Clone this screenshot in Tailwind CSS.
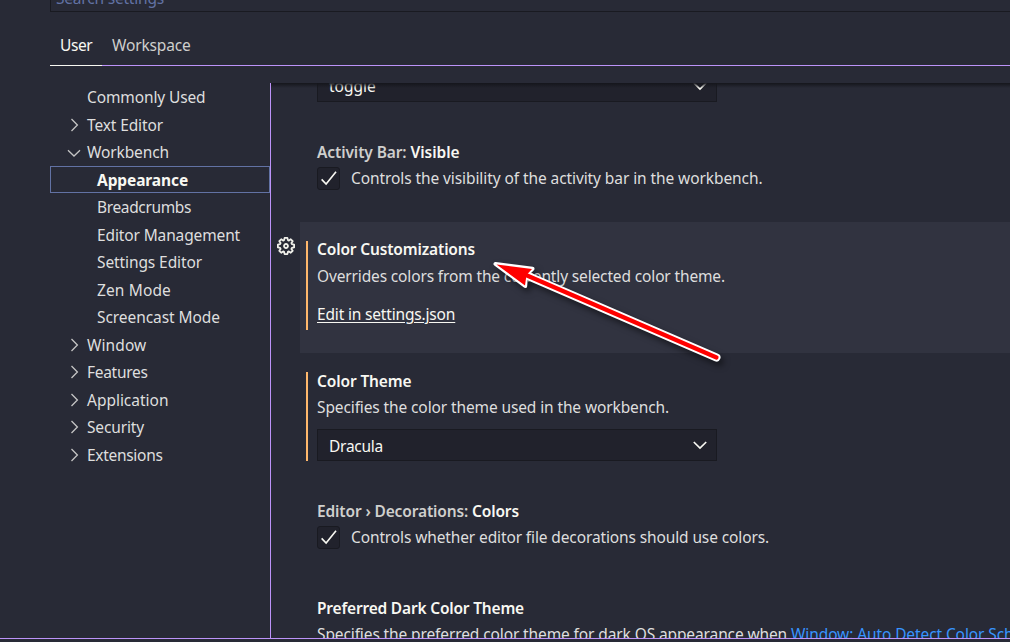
<!DOCTYPE html>
<html lang="en">
<head>
<meta charset="utf-8">
<title>Settings</title>
<script src="https://cdn.jsdelivr.net/npm/@tailwindcss/browser@4"></script>
</head>
<body class="bg-[#282a36]">
<svg class="hidden">
  <symbol id="right" viewBox="0 0 16 16"><path d="M5.5 2 L11.4 8 L5.5 14" fill="none" stroke="#c5c5c5" stroke-width="1.3"/></symbol>
  <symbol id="down" viewBox="0 0 16 16"><path d="M2 5.3 L8 11 L14 5.3" fill="none" stroke="#c5c5c5" stroke-width="1.3"/></symbol>
  <symbol id="drop" viewBox="0 0 16 16"><path d="M1.8 5 L8 11 L14.2 5" fill="none" stroke="#f8f8f2" stroke-width="1.7"/></symbol>
  <symbol id="check" viewBox="0 0 20 20"><path d="M1.8 10.4 L6.8 15.6 L17.8 2" fill="none" stroke="#f8f8f2" stroke-width="1.8"/></symbol>
</svg>
<div class="relative flex h-[642px] w-[1010px] flex-col overflow-hidden bg-[#282a36] font-['Noto_Sans','Open_Sans',sans-serif] text-[15.5px] leading-[18px] tracking-[-0.12px] whitespace-nowrap text-[#dedede]">
  <div class="ml-[50px] flex h-[12px] shrink-0 items-end overflow-hidden border-b border-l border-[#191a21] pl-[5px] text-[#6272a4]">
    <span class="pb-[3px] leading-[20px] tracking-[-0.2px]">Search settings</span>
  </div>
  <nav class="ml-[50px] flex h-[54px] shrink-0 border-b border-[#bd93f9] pt-[14px]">
    <div class="-mb-px flex w-[52px] border-b border-[#f8f8f2] pt-[10px] pl-[10px] tracking-[-0.4px] text-[#f8f8f2]">User</div>
    <div class="pt-[10px] pl-[10px] tracking-[-0.16px] text-[#cfcfcd]">Workspace</div>
  </nav>
  <div class="mt-[17px] ml-[50px] flex h-[555px] shrink-0 overflow-hidden">
    <aside class="w-[220px] shrink-0 pt-[0.9px] leading-[27.5px]">
      <div class="flex h-[27.5px] items-center pl-[37px]">Commonly Used</div>
      <div class="flex h-[27.5px] items-center pt-[1.2px] pl-[16px]"><svg class="mr-[5px] mb-[2px] size-4"><use href="#right"/></svg><span>Text Editor</span></div>
      <div class="flex h-[27.5px] items-center pl-[16px]"><svg class="mr-[5px] size-4"><use href="#down"/></svg><span>Workbench</span></div>
      <div class="flex h-[27px] items-center border border-[#6272a4] pt-[2px] pl-[46px] font-bold tracking-[-0.1px] text-[#f8f8f2]">Appearance</div>
      <div class="mt-[0.5px] flex h-[27.5px] items-center pl-[47px] tracking-[-0.36px]">Breadcrumbs</div>
      <div class="flex h-[27.5px] items-center pt-[1.2px] pl-[47px] tracking-[-0.13px]">Editor Management</div>
      <div class="flex h-[27.5px] items-center pl-[47px] tracking-[-0.1px]">Settings Editor</div>
      <div class="flex h-[27.5px] items-center pt-[1.2px] pl-[47px] tracking-[0.13px]">Zen Mode</div>
      <div class="flex h-[27.5px] items-center pl-[47px] tracking-[-0.07px]">Screencast Mode</div>
      <div class="flex h-[27.5px] items-center pt-[1.2px] pl-[16px] tracking-[0.1px]"><svg class="mr-[5px] mb-[2px] size-4"><use href="#right"/></svg><span>Window</span></div>
      <div class="flex h-[27.5px] items-center pl-[16px] tracking-[-0.3px]"><svg class="mr-[5px] mb-[2px] size-4"><use href="#right"/></svg><span>Features</span></div>
      <div class="flex h-[27.5px] items-center pt-[1.2px] pl-[16px] tracking-[-0.02px]"><svg class="mr-[5px] mb-[2px] size-4"><use href="#right"/></svg><span>Application</span></div>
      <div class="flex h-[27.5px] items-center pl-[16px] tracking-[-0.15px]"><svg class="mr-[5px] mb-[2px] size-4"><use href="#right"/></svg><span>Security</span></div>
      <div class="flex h-[27.5px] items-center pt-[1.2px] pl-[16px] tracking-[-0.3px]"><svg class="mr-[5px] mb-[2px] size-4"><use href="#right"/></svg><span>Extensions</span></div>
    </aside>
    <main class="relative flex min-w-0 flex-1 flex-col overflow-hidden border-l border-[#bd93f9]">
      <div class="absolute inset-x-0 top-0 h-[5px] bg-linear-to-b from-[#15161c] to-transparent"></div>
      <div class="ml-[46px] flex h-[19px] w-[400px] shrink-0 items-end justify-between overflow-hidden border border-t-0 border-[#191a21] bg-[#21222c] pr-[8px] pl-[11px] tracking-normal text-[#f8f8f2]">
        <span class="pb-[6px]">toggle</span><svg class="mb-[7px] size-4 shrink-0"><use href="#drop"/></svg>
      </div>
      <h3 class="mt-[41px] ml-[46px] h-[18px] shrink-0 font-semibold tracking-[-0.1px] text-[#f8f8f2]"><span class="text-[#cfcfcd]">Activity Bar: </span><span class="tracking-[-0.05px]">Visible</span></h3>
      <div class="mt-[6px] ml-[46px] flex h-[23px] shrink-0 items-center">
        <div class="mr-[11px] flex size-[23px] items-center justify-center rounded-[3px] border border-[#191a21] bg-[#21222c]"><svg class="size-[18px]"><use href="#check"/></svg></div>
        <span class="pb-[2px] tracking-[-0.088px]">Controls the visibility of the activity bar in the workbench.</span>
      </div>
      <section class="mt-[32px] flex h-[131px] shrink-0 items-start">
        <svg class="mt-[14px] ml-[5px] size-5 shrink-0" viewBox="-10 -10 20 20" fill="none" stroke="#f0f0ea" stroke-width="1.8" stroke-linejoin="round"><path d="M-1.4 -8.1H1.4L1.9 -5.9L2.9 -5.4L4.8 -6.7L6.7 -4.8L5.4 -2.9L5.9 -1.9L8.1 -1.4V1.4L5.9 1.9L5.4 2.9L6.7 4.8L4.8 6.7L2.9 5.4L1.9 5.9L1.4 8.1H-1.4L-1.9 5.9L-2.9 5.4L-4.8 6.7L-6.7 4.8L-5.4 2.9L-5.9 1.9L-8.1 1.4V-1.4L-5.9 -1.9L-5.4 -2.9L-6.7 -4.8L-4.8 -6.7L-2.9 -5.4L-1.9 -5.9Z"/><circle r="2"/></svg>
        <div class="ml-[4px] h-[131px] flex-1 bg-[#313340] pt-[19px] pl-[6px]">
          <div class="flex h-[89px] flex-col items-start border-l-2 border-[#ffb86c] pl-[9px]">
            <h3 class="-mt-px font-semibold tracking-[-0.152px] text-[#f8f8f2]">Color Customizations</h3>
            <p class="mt-[9px] tracking-[-0.143px]">Overrides colors from the currently selected color theme.</p>
            <a class="mt-[20px] tracking-[-0.17px] text-[#f8f8f2] underline decoration-1 underline-offset-2">Edit in settings.json</a>
          </div>
        </div>
      </section>
      <section class="mt-[19px] ml-[35px] h-[89px] shrink-0 border-l-2 border-[#ffb86c] pl-[9px]">
        <h3 class="font-semibold tracking-[-0.126px] text-[#f8f8f2]">Color Theme</h3>
        <p class="mt-[8px] tracking-[-0.118px]">Specifies the color theme used in the workbench.</p>
        <div class="mt-[13px] flex h-[32px] w-[400px] items-center justify-between border border-[#191a21] bg-[#21222c] pr-[8px] pl-[11px] tracking-[-0.26px] text-[#f8f8f2]">
          <span class="pt-[1px]">Dracula</span><svg class="size-4 shrink-0"><use href="#drop"/></svg>
        </div>
      </section>
      <h3 class="mt-[41px] ml-[46px] h-[18px] shrink-0 font-semibold tracking-[-0.138px] text-[#f8f8f2]"><span class="text-[#cfcfcd]">Editor › Decorations: </span>Colors</h3>
      <div class="mt-[6px] ml-[46px] flex h-[23px] shrink-0 items-center">
        <div class="mr-[11px] flex size-[23px] items-center justify-center rounded-[3px] border border-[#191a21] bg-[#21222c]"><svg class="size-[18px]"><use href="#check"/></svg></div>
        <span class="pb-[2px] tracking-[-0.123px]">Controls whether editor file decorations should use colors.</span>
      </div>
      <h3 class="mt-[50px] ml-[46px] h-[18px] shrink-0 font-semibold tracking-[-0.191px] text-[#f8f8f2]">Preferred Dark Color Theme</h3>
      <p class="mt-[8px] ml-[46px] shrink-0 tracking-[-0.115px]">Specifies the preferred color theme for dark OS appearance when <span class="tracking-[-0.1px] text-[#3794ff]">Window: Auto Detect Color Scheme</span></p>
    </main>
  </div>
  <div class="h-px shrink-0 bg-[#bd93f9]"></div>
  <svg class="absolute top-[240px] left-[470px] h-[140px] w-[270px] drop-shadow-[3px_4px_3px_rgba(0,0,0,0.5)]" viewBox="470 240 270 140" stroke-linejoin="round" stroke-linecap="round">
    <path d="M528 276 L716.5 357.5" stroke="#fff" stroke-width="8"/>
    <path d="M495.5 264 L532.5 268.8 L526 275 L525.2 286 Z" fill="#fff" stroke="#fff" stroke-width="4"/>
    <path d="M496.5 264.5 L532 269 L526.5 275 L525 285.5 Z" fill="#f00"/>
    <path d="M523 273.8 L716.5 357.5" stroke="#f00" stroke-width="4.2"/>
  </svg>
</div>
</body>
</html>
